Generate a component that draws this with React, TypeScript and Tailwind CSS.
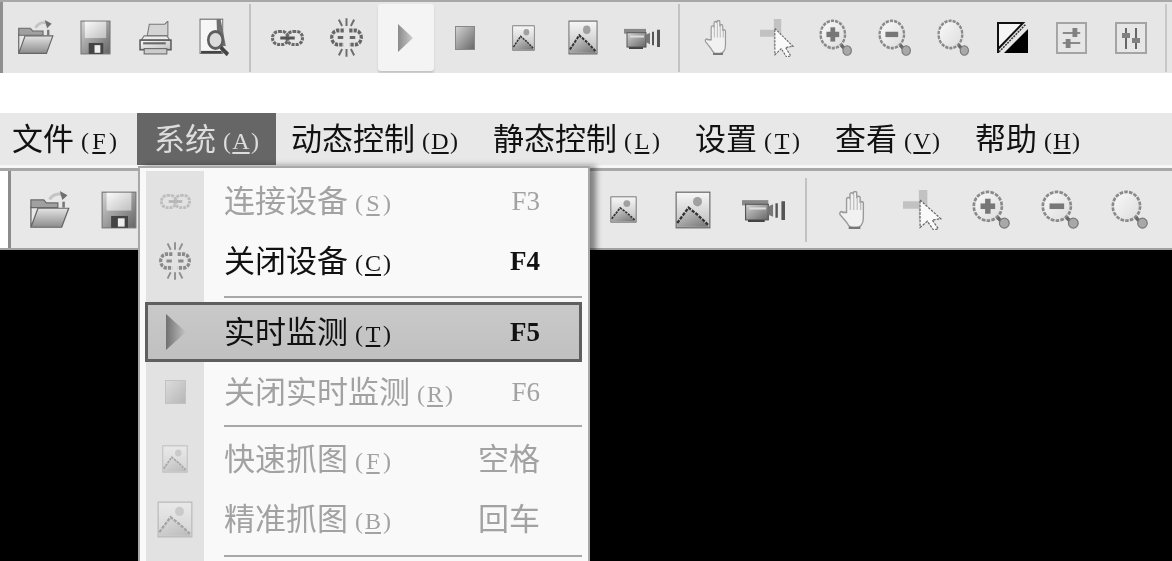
import React from "react";

type IC = { className?: string };
const S = ({ className = "", children }: IC & { children: React.ReactNode }) => (
  <svg viewBox="0 0 32 32" preserveAspectRatio="none" className={className}>{children}</svg>
);

const Folder = ({ className }: IC) => (
  <S className={className}>
    <path d="M1.500 7.500h10l2 2.500h9v4H1.500z" fill="#a0a0a0" stroke="#6a6a6a" />
    <path d="M1.500 30.500V13M1.500 30.500L7 14.500H31L25.500 30.500Z" fill="url(#gFolder)" stroke="#666" />
    <path d="M16 7Q20 1 26 3" fill="none" stroke="#c4c4c4" strokeWidth="2.500" />
    <path d="M24 0l6 3.500-4 4z" fill="#6e6e6e" />
    <path d="M27 9v5" stroke="#777" strokeWidth="2" />
  </S>
);
const Save = ({ className }: IC) => (
  <S className={className}>
    <rect x="1" y="1" width="30" height="30" fill="url(#gDark)" stroke="#777" />
    <rect x="5" y="1.500" width="22" height="15" fill="url(#gLight)" />
    <rect x="9" y="21" width="15" height="10" fill="#444" />
    <rect x="15" y="23" width="6" height="7" fill="#eee" />
  </S>
);
const Printer = ({ className }: IC) => (
  <S className={className}>
    <path d="M8 14L10 3h15l3-3v14z" fill="#d4d4d4" stroke="#777" />
    <path d="M5 14h22l3 4H2z" fill="#ececec" stroke="#777" />
    <rect x="1" y="18" width="30" height="9" fill="url(#gLight)" stroke="#5c5c5c" strokeWidth="1.500" />
    <rect x="5" y="26" width="22" height="5" fill="#cccccc" stroke="#666" />
    <path d="M4 21h22" stroke="#6a6a6a" strokeWidth="2" />
  </S>
);
const Preview = ({ className }: IC) => (
  <S className={className}>
    <rect x="1" y="1" width="22" height="28" fill="#f6f6f6" stroke="#777" />
    <path d="M17 1h4l5 22h-8z" fill="#707070" />
    <circle cx="16" cy="18" r="7" fill="#dcdcdc" stroke="#5e5e5e" strokeWidth="2.500" />
    <path d="M21 24l7 6" stroke="#444" strokeWidth="3.500" />
    <path d="M2 28h20" stroke="#444" strokeWidth="2" />
  </S>
);
const LinkIcon = ({ className }: IC) => (
  <svg viewBox="0 0 32 16" preserveAspectRatio="none" className={className}>
    <rect x="1.500" y="1.500" width="15" height="13" rx="6" fill="none" stroke="#6a6a6a" strokeWidth="3" strokeDasharray="3 1" />
    <rect x="15.500" y="1.500" width="15" height="13" rx="6" fill="none" stroke="#6a6a6a" strokeWidth="3" strokeDasharray="3 1" />
    <path d="M9 8h14" stroke="#555" strokeWidth="3" />
  </svg>
);
const Spark = ({ className }: IC) => (
  <S className={className}>
    <path d="M13.500 10.500H8a5.500 5.500 0 000 11h5.500" fill="none" stroke="#666" strokeWidth="3" strokeDasharray="3 1" />
    <path d="M18.500 10.500H24a5.500 5.500 0 010 11h-5.500" fill="none" stroke="#666" strokeWidth="3" strokeDasharray="3 1" />
    <path d="M8 16h5M19 16h5" stroke="#666" strokeWidth="2.500" />
    <path d="M16 1v6M9 2l3 5M23 2l-3 5M16 25v6M9 30l3-5M23 30l-3-5" stroke="#6e6e6e" strokeWidth="1.800" />
  </S>
);
const Play = ({ className }: IC) => (
  <svg viewBox="0 0 16 28" preserveAspectRatio="none" className={className}>
    <path d="M0 0L16 14 0 28Z" fill="url(#gPlay)" />
  </svg>
);
const Stop = ({ className }: IC) => (
  <svg viewBox="0 0 20 24" preserveAspectRatio="none" className={className}>
    <rect x="0.500" y="0.500" width="19" height="23" fill="url(#gDark)" stroke="#888" />
  </svg>
);
const Picture = ({ className }: IC) => (
  <S className={className}>
    <rect x="1" y="1" width="30" height="30" fill="url(#gPic)" stroke="#666" />
    <circle cx="20" cy="9" r="4" fill="#a0a0a0" />
    <path d="M2 30V27L12 15l8 6 10 9z" fill="url(#gDark)" opacity=".85" />
    <path d="M2 27L12 14 L20 20 L30 29" fill="none" stroke="#333" strokeWidth="2" strokeDasharray="3 1" />
  </S>
);
const Camera = ({ className }: IC) => (
  <svg viewBox="0 0 36 24" preserveAspectRatio="none" className={className}>
    <path d="M0 3h22v5H0z" fill="#888" />
    <rect x="3" y="7" width="19" height="15" fill="url(#gDark)" stroke="#555" />
    <rect x="6" y="10" width="14" height="2" fill="#ddd" />
    <path d="M22 9l4-2v12l-4-2z" fill="#777" />
    <path d="M28 6h2v14h-2zM33 4h3v18h-3z" fill="#555" />
    <rect x="5" y="22" width="14" height="2" fill="#444" />
  </svg>
);
const Hand = ({ className }: IC) => (
  <S className={className}>
    <path d="M9 18V7a1.600 1.600 0 013.200 0v-4a1.600 1.600 0 013.200 0V2a1.600 1.600 0 013.200 0v4a1.600 1.600 0 013.200 0V10a1.600 1.600 0 013 0v13c0 5-3 8-7 8h-3c-3 0-4-2-6-5L3 20c-1.300-2 1-3.500 2.500-2z" fill="#f1f1f1" stroke="#9a9a9a" strokeWidth="1.300" />
    <path d="M12.500 5v11M15.800 3v13M19 5v11M22.300 9v7" stroke="#b4b4b4" />
    <path d="M11 31h11" stroke="#777" strokeWidth="2" />
  </S>
);
const Pointer = ({ className }: IC) => (
  <S className={className}>
    <path d="M0 9h13V0h7v24h-7V15H0z" fill="#c2c2c2" />
    <path d="M14 8l17 15-7 1 5 7-4 1-5-7-6 5z" fill="#fafafa" stroke="#666" strokeDasharray="2 1" />
  </S>
);
const Mag = ({ className, mark }: IC & { mark?: "plus" | "minus" }) => (
  <S className={className}>
    <circle cx="13" cy="13" r="11.500" fill="url(#gMag)" stroke="#8a8a8a" strokeWidth="2.200" strokeDasharray="3 1" />
    {mark && <path d="M7 13h12" stroke="#777" strokeWidth="4.500" />}
    {mark === "plus" && <path d="M13 7v12" stroke="#777" strokeWidth="4.500" />}
    <path d="M21 22l7 7" stroke="#666" strokeWidth="3" />
    <circle cx="26.500" cy="26.500" r="4" fill="#a8a8a8" stroke="#777" />
  </S>
);
const Contrast = ({ className }: IC) => (
  <S className={className}>
    <path d="M1 31V1h25L1 27z" fill="#f6f6f6" stroke="#111" strokeWidth="2" />
    <path d="M7 31L31 7v24z" fill="#000" />
    <path d="M2 30L29 2" stroke="#333" strokeWidth="1.500" strokeDasharray="2 1" />
  </S>
);
const SliderH = ({ className }: IC) => (
  <S className={className}>
    <rect x="1" y="1" width="30" height="30" fill="#e6e6e6" stroke="#a4a4a4" strokeWidth="2" />
    <path d="M7 11h18M7 21h18" stroke="#8a8a8a" strokeWidth="2" />
    <rect x="17" y="6" width="5" height="9" fill="#808080" />
    <rect x="10" y="17" width="5" height="9" fill="#808080" />
  </S>
);
const SliderV = ({ className }: IC) => (
  <S className={className}>
    <rect x="1" y="1" width="30" height="30" fill="#e6e6e6" stroke="#a4a4a4" strokeWidth="2" />
    <path d="M11 6v21M21 6v21" stroke="#666" strokeWidth="2" />
    <rect x="7" y="11" width="8" height="5" fill="#808080" />
    <rect x="17" y="16" width="8" height="5" fill="#808080" />
  </S>
);

const TopSlot = ({ wide, children }: { wide?: boolean; children: React.ReactNode }) => (
  <div className={`flex h-full items-center justify-center ${wide ? "w-[60px]" : "w-[59px]"}`}>{children}</div>
);
const BigSlot = ({ narrow, children }: { narrow?: boolean; children: React.ReactNode }) => (
  <div className={`flex h-full items-center justify-center ${narrow ? "w-[69px]" : "w-[70px]"}`}>{children}</div>
);

const cjk = "font-['Noto_Sans_CJK_SC',sans-serif]";
const serif = "font-['Liberation_Serif',serif]";

const Mnemonic = ({ k }: { k: string }) => (
  <span className={`${serif} ml-[7px] inline-flex w-[36px] justify-between pt-[4px] text-[24px] leading-none`}>
    <span>(</span>
    <span className="underline underline-offset-[3px]">{k}</span>
    <span>)</span>
  </span>
);

const Label = ({ children }: { children: React.ReactNode }) => (
  <span className="pb-[6px] text-[31px] leading-none">{children}</span>
);

const TopMenu = ({ label, k, active }: { label: string; k: string; active?: boolean }) => (
  <div className={`flex h-full items-center px-[17px] ${active ? "bg-[#666666] text-[#dddddd]" : "text-[#111111]"}`}>
    <Label>{label}</Label>
    <Mnemonic k={k} />
  </div>
);

const Row = ({
  icon, label, k, shortcut, disabled, selected,
}: {
  icon: React.ReactNode; label: string; k: string; shortcut: string; disabled?: boolean; selected?: boolean;
}) => (
  <div
    className={`flex items-center ${
      selected
        ? "-ml-px h-[60px] border-[3px] border-[#5f5f5f] bg-gradient-to-b from-[#c9c9c9] to-[#c0c0c0] text-[#111111]"
        : `h-[60px] ${disabled ? "text-[#a2a2a2]" : "text-[#111111]"}`
    }`}
  >
    <div className={`flex h-full shrink-0 items-center justify-center ${selected ? "w-[56px]" : "w-[58px] bg-[#e2e2e2]"}`}>
      {icon}
    </div>
    <div className={`ml-[20px] flex flex-1 items-center justify-between ${selected ? "pr-[39px]" : "pr-[42px]"}`}>
      <div className="flex items-center">
        <Label>{label}</Label>
        <Mnemonic k={k} />
      </div>
      {/^F/.test(shortcut) ? (
        <span className={`${serif} text-[27px] leading-none ${disabled ? "" : "font-bold"}`}>{shortcut}</span>
      ) : (
        <Label>{shortcut}</Label>
      )}
    </div>
  </div>
);

const Sep = ({ h }: { h: string }) => (
  <div className={`flex items-center ${h}`}>
    <div className="h-full w-[58px] shrink-0 bg-[#e2e2e2]" />
    <div className="ml-[20px] h-[2px] flex-1 bg-[#a8a8a8]" />
  </div>
);

export default function App() {
  return (
    <div className={`relative flex h-[561px] w-[1172px] flex-col overflow-hidden bg-white blur-[0.6px] ${cjk}`}>
      <svg className="absolute h-0 w-0">
        <defs>
          <linearGradient id="gFolder" x1="0" y1="0" x2="0" y2="1"><stop offset="0" stopColor="#ececec" /><stop offset="1" stopColor="#8c8c8c" /></linearGradient>
          <linearGradient id="gDark" x1="0" y1="0" x2="1" y2="1"><stop offset="0" stopColor="#d4d4d4" /><stop offset="1" stopColor="#666666" /></linearGradient>
          <linearGradient id="gLight" x1="0" y1="0" x2="1" y2="1"><stop offset="0" stopColor="#fafafa" /><stop offset="1" stopColor="#c0c0c0" /></linearGradient>
          <linearGradient id="gPlay" x1="0" y1="0" x2="1" y2="0"><stop offset="0" stopColor="#707070" /><stop offset="1" stopColor="#c4c4c4" /></linearGradient>
          <linearGradient id="gPic" x1="0" y1="0" x2="0" y2="1"><stop offset="0" stopColor="#f7f7f7" /><stop offset="1" stopColor="#bcbcbc" /></linearGradient>
          <linearGradient id="gMag" x1="0" y1="0" x2="1" y2="1"><stop offset="0" stopColor="#fafafa" /><stop offset="1" stopColor="#dcdcdc" /></linearGradient>
        </defs>
      </svg>

      <div className="h-[2px] bg-[#a8a8a8]" />
      <div className="flex h-[71px] items-center bg-[#e6e6e6]">
        <div className="h-full w-[3px] bg-[#8f8f8f]" />
        <div className="flex h-full pl-[2px]">
          <TopSlot wide><Folder className="h-[35px] w-[37px]" /></TopSlot>
          <TopSlot wide><Save className="h-[35px] w-[31px]" /></TopSlot>
          <TopSlot wide><Printer className="h-[34px] w-[33px]" /></TopSlot>
          <TopSlot wide><Preview className="h-[39px] w-[33px]" /></TopSlot>
        </div>
        <div className="ml-[4px] h-[68px] w-[2px] bg-[#c2c2c2]" />
        <div className="ml-[7px] flex h-full">
          <TopSlot><LinkIcon className="h-[16px] w-[33px]" /></TopSlot>
          <TopSlot><Spark className="h-[41px] w-[35px]" /></TopSlot>
          <TopSlot>
            <div className="flex h-[67px] w-[56px] items-center justify-center rounded-[3px] bg-[#f4f4f4] shadow-[0_2px_2px_#c4c4c4]">
              <Play className="h-[28px] w-[15px] opacity-80" />
            </div>
          </TopSlot>
          <TopSlot><Stop className="h-[24px] w-[20px]" /></TopSlot>
          <TopSlot><Picture className="h-[26px] w-[23px]" /></TopSlot>
          <TopSlot><Picture className="h-[35px] w-[30px]" /></TopSlot>
          <TopSlot><Camera className="h-[23px] w-[36px]" /></TopSlot>
        </div>
        <div className="ml-[7px] h-[68px] w-[2px] bg-[#c2c2c2]" />
        <div className="ml-[8px] flex h-full">
          <TopSlot><Hand className="h-[35px] w-[29px]" /></TopSlot>
          <TopSlot><Pointer className="h-[38px] w-[34px]" /></TopSlot>
          <TopSlot><Mag mark="plus" className="h-[38px] w-[34px]" /></TopSlot>
          <TopSlot><Mag mark="minus" className="h-[38px] w-[34px]" /></TopSlot>
          <TopSlot><Mag className="h-[38px] w-[33px]" /></TopSlot>
          <TopSlot><Contrast className="h-[32px] w-[32px]" /></TopSlot>
          <TopSlot><SliderH className="h-[32px] w-[31px]" /></TopSlot>
          <TopSlot><SliderV className="h-[32px] w-[32px]" /></TopSlot>
        </div>
        <div className="ml-[5px] h-[68px] w-[2px] bg-[#c8c8c8]" />
      </div>

      <div className="h-[40px] bg-white" />

      <div className="flex h-[52px] items-center gap-[1px] bg-[#e8e8e8] [&>*:first-child]:-ml-[5px] [&>*:first-child]:mr-[2px] [&>*:nth-child(3)]:-ml-[3px]">
        <TopMenu label="文件" k="F" />
        <TopMenu label="系统" k="A" active />
        <TopMenu label="动态控制" k="D" />
        <TopMenu label="静态控制" k="L" />
        <TopMenu label="设置" k="T" />
        <TopMenu label="查看" k="V" />
        <TopMenu label="帮助" k="H" />
      </div>
      <div className="h-[3px] bg-[#f6f6f6]" />
      <div className="h-[3px] bg-[#a8a8a8]" />

      <div className="flex h-[77px] items-center bg-[#e8e8e8]">
        <div className="h-full w-[8px] bg-white" />
        <div className="h-full w-[3px] bg-[#8c8c8c]" />
        <div className="flex h-full pl-[3px]">
          <BigSlot><Folder className="h-[38px] w-[41px]" /></BigSlot>
          <BigSlot><Save className="h-[38px] w-[36px]" /></BigSlot>
          <BigSlot><Printer className="h-[38px] w-[38px]" /></BigSlot>
          <BigSlot><Preview className="h-[42px] w-[38px]" /></BigSlot>
        </div>
        <div className="ml-[4px] h-[64px] w-[2px] bg-[#c2c2c2]" />
        <div className="ml-[8px] flex h-full">
          <BigSlot><LinkIcon className="h-[18px] w-[38px]" /></BigSlot>
          <BigSlot><Spark className="h-[44px] w-[40px]" /></BigSlot>
          <BigSlot><Play className="h-[32px] w-[17px]" /></BigSlot>
          <BigSlot><Stop className="h-[28px] w-[23px]" /></BigSlot>
          <BigSlot><Picture className="h-[27px] w-[27px]" /></BigSlot>
          <BigSlot><Picture className="h-[38px] w-[36px]" /></BigSlot>
          <BigSlot><Camera className="h-[25px] w-[43px]" /></BigSlot>
        </div>
        <div className="ml-[7px] h-[64px] w-[2px] bg-[#c2c2c2]" />
        <div className="ml-[12px] flex h-full">
          <BigSlot narrow><Hand className="h-[38px] w-[34px]" /></BigSlot>
          <BigSlot narrow><Pointer className="h-[40px] w-[39px]" /></BigSlot>
          <BigSlot narrow><Mag mark="plus" className="h-[40px] w-[39px]" /></BigSlot>
          <BigSlot narrow><Mag mark="minus" className="h-[40px] w-[39px]" /></BigSlot>
          <BigSlot narrow><Mag className="h-[40px] w-[38px]" /></BigSlot>
        </div>
      </div>
      <div className="h-[2px] bg-[#a0a0a0]" />
      <div className="flex-1 bg-black" />

      <div className="absolute left-[138px] top-[166px] h-[395px] w-[452px] overflow-hidden border-x-2 border-t-2 border-[#a8a8a8] bg-[#f9f9f9] px-[6px] pt-[3px] shadow-[6px_0_6px_rgba(0,0,0,0.45)]">
        <Row disabled icon={<LinkIcon className="h-[15px] w-[31px] opacity-30" />} label="连接设备" k="S" shortcut="F3" />
        <Row icon={<Spark className="h-[40px] w-[34px] opacity-70" />} label="关闭设备" k="C" shortcut="F4" />
        <Sep h="h-[11px]" />
        <Row selected icon={<Play className="h-[36px] w-[20px]" />} label="实时监测" k="T" shortcut="F5" />
        <Row disabled icon={<Stop className="h-[24px] w-[21px] opacity-35" />} label="关闭实时监测" k="R" shortcut="F6" />
        <Sep h="h-[7px]" />
        <Row disabled icon={<Picture className="h-[28px] w-[26px] opacity-35" />} label="快速抓图" k="F" shortcut="空格" />
        <Row disabled icon={<Picture className="h-[37px] w-[36px] opacity-35" />} label="精准抓图" k="B" shortcut="回车" />
        <Sep h="h-[14px]" />
      </div>
    </div>
  );
}
